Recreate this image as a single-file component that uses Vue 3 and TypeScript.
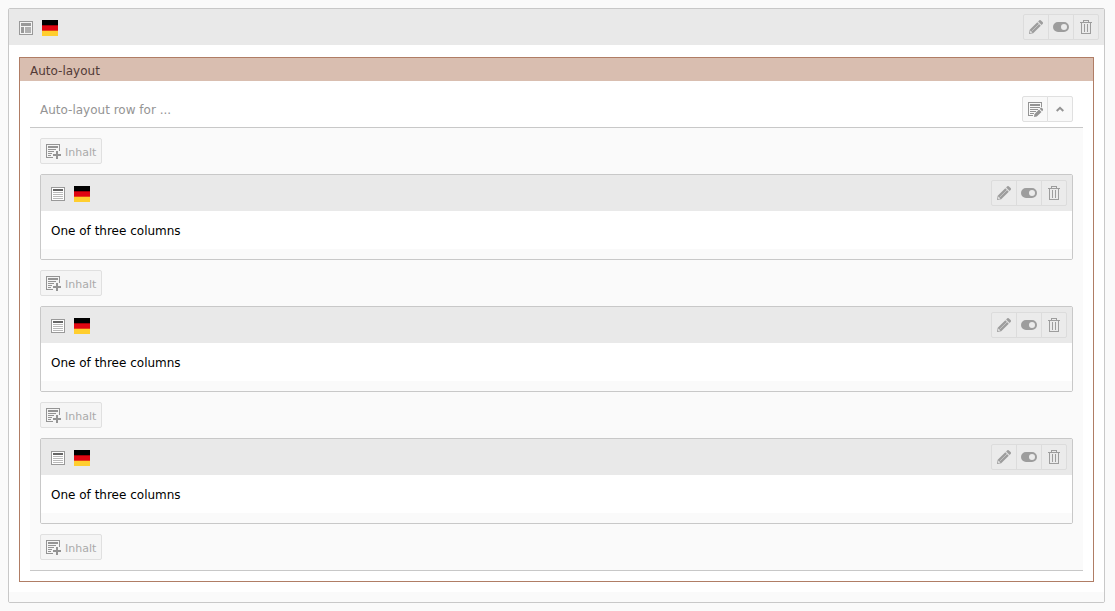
<script setup lang="ts">
interface ContentElement {
  id: number
  text: string
}

const elements: ContentElement[] = [
  { id: 1, text: 'One of three columns' },
  { id: 2, text: 'One of three columns' },
  { id: 3, text: 'One of three columns' },
]
</script>

<template>
  <svg class="sprite" aria-hidden="true">
    <symbol id="icon-container" viewBox="0 0 16 16">
      <path fill="#999" d="M1 1h14v14H1z" />
      <path fill="#f4f4f4" d="M2 2h12v12H2z" />
      <path fill="#999" d="M3 3h10v3H3zM3 7h3v6H3z" />
      <path fill="#b0b0b0" d="M7 7h6v6H7z" />
    </symbol>
    <symbol id="icon-text" viewBox="0 0 16 16">
      <path fill="#999" d="M1 1h14v14H1z" />
      <path fill="#fff" d="M2 2h12v12H2z" />
      <path fill="#666" d="M3 3h10v2H3z" />
      <path fill="#b9b9b9" d="M3 6h10v1H3zM3 8h10v1H3zM3 10h10v1H3zM3 12h10v1H3z" />
    </symbol>
    <symbol id="icon-flag" viewBox="0 0 16 16">
      <path d="M0 0h16v5H0z" />
      <path fill="#a30008" d="M0 5h16v1H0z" />
      <path fill="#e00712" d="M0 6h16v4H0z" />
      <path fill="#e8401a" d="M0 10h16v1H0z" />
      <path fill="#ffce2e" d="M0 11h16v5H0z" />
    </symbol>
    <symbol id="icon-pencil" viewBox="0 0 16 16">
      <path fill="#9d9d9d" fill-rule="evenodd" d="M9.3 3.2l3.5 3.5-7.6 7.6L1 15l.7-4.2zM2.400 11.600L2 14l2.400-.4z" />
      <path fill="#9d9d9d" d="M10.1 2.4l1.200-1.200q.7-.5 1.400 0l2.100 2.100q.5.7 0 1.400l-1.200 1.200z" />
      <path stroke="#d5d5d5" stroke-width=".7" d="M4 11.900L11 5M9.600 2.800l3.600 3.600" />
    </symbol>
    <symbol id="icon-toggle" viewBox="0 0 16 16">
      <path fill="#9d9d9d" fill-rule="evenodd" d="M5 3h6a5 5 0 0 1 0 10H5A5 5 0 0 1 5 3zm6 2a3 3 0 1 0 0 6 3 3 0 0 0 0-6z" />
    </symbol>
    <symbol id="icon-trash" viewBox="0 0 16 16">
      <path fill="#9d9d9d" fill-rule="evenodd" d="M5 1h6v2h3v1h-1v11H3V4H2V3h3zM6 2v1h4V2zM4 4v10h8V4z" />
      <path fill="#9d9d9d" d="M6 5h1v8H6zM9 5h1v8H9z" />
    </symbol>
    <symbol id="icon-new" viewBox="0 0 16 16">
      <path fill="#949494" d="M1 1h14v7h-1V2H2v12h6v1H1z" />
      <path fill="#949494" d="M3 3h10v2H3zM3 6h8v1H3zM3 8h6v1H3zM3 10h4v1H3zM3 12h3v1H3z" />
      <path fill="#949494" d="M11 8h2v3h3v2h-3v3h-2v-3H8v-2h3z" />
    </symbol>
    <symbol id="icon-edit-doc" viewBox="0 0 16 16">
      <path fill="#949494" d="M1 1h14v5h-1V2H2v12h4v1H1z" />
      <path fill="#949494" d="M3 3h10v2H3zM3 6h10v1H3zM3 8h8v1H3zM3 10h6v1H3zM3 12h4v1H3z" />
      <path fill="#949494" d="M12 8.500l2.500 2.500L9.800 15.600 7 16l.4-2.800zM12.700 7.800l1-1q.5-.4 1 0l1.400 1.400q.4.500 0 1l-1 1z" />
    </symbol>
    <symbol id="icon-up" viewBox="0 0 16 16">
      <path fill="none" stroke="#949494" stroke-width="2" d="M4.700 10L8 6.800 11.300 10" />
    </symbol>
  </svg>

  <main class="card">
    <header class="card-header">
      <div class="icons">
        <svg class="icon"><use href="#icon-container" /></svg>
        <svg class="icon"><use href="#icon-flag" /></svg>
      </div>
      <div class="btn-group">
        <button type="button" class="btn" aria-label="Bearbeiten"><svg class="icon"><use href="#icon-pencil" /></svg></button>
        <button type="button" class="btn" aria-label="Verbergen"><svg class="icon"><use href="#icon-toggle" /></svg></button>
        <button type="button" class="btn" aria-label="Löschen"><svg class="icon"><use href="#icon-trash" /></svg></button>
      </div>
    </header>

    <div class="card-body">
      <section class="container">
        <h1 class="container-title">Auto-layout</h1>
        <div class="row">
          <div class="row-header">
            <h2 class="row-title">Auto-layout row for ...</h2>
            <div class="btn-group">
              <button type="button" class="btn light" aria-label="Spalte bearbeiten"><svg class="icon"><use href="#icon-edit-doc" /></svg></button>
              <button type="button" class="btn light" aria-label="Einklappen"><svg class="icon"><use href="#icon-up" /></svg></button>
            </div>
          </div>
          <div class="row-body">
            <button type="button" class="btn add"><svg class="icon"><use href="#icon-new" /></svg><span class="label">Inhalt</span></button>
            <template v-for="element in elements" :key="element.id">
              <article class="card">
                <header class="card-header">
                  <div class="icons">
                    <svg class="icon"><use href="#icon-text" /></svg>
                    <svg class="icon"><use href="#icon-flag" /></svg>
                  </div>
                  <div class="btn-group">
                    <button type="button" class="btn" aria-label="Bearbeiten"><svg class="icon"><use href="#icon-pencil" /></svg></button>
                    <button type="button" class="btn" aria-label="Verbergen"><svg class="icon"><use href="#icon-toggle" /></svg></button>
                    <button type="button" class="btn" aria-label="Löschen"><svg class="icon"><use href="#icon-trash" /></svg></button>
                  </div>
                </header>
                <p class="text">{{ element.text }}</p>
                <div class="card-footer"></div>
              </article>
              <button type="button" class="btn add"><svg class="icon"><use href="#icon-new" /></svg><span class="label">Inhalt</span></button>
            </template>
          </div>
        </div>
      </section>
    </div>
    <div class="card-footer"></div>
  </main>
</template>

<style>
body {
  background: #fafafa;
}

#app {
  padding: 8px 10px 8px 8px;
  font-family: Verdana, "DejaVu Sans", sans-serif;
  font-size: 12px;
  line-height: 18px;
}
</style>

<style scoped>
.sprite {
  position: absolute;
  width: 0;
  height: 0;
}

.icon {
  display: block;
  flex: none;
  width: 16px;
  height: 16px;
}

.card {
  overflow: hidden;
  border: 1px solid #c8c8c8;
  border-radius: 2px;
  background: #fff;
}

.card-header {
  display: flex;
  align-items: center;
  justify-content: space-between;
  padding: 5px 5px 5px 9px;
  background: #e9e9e9;
}

.card-footer {
  height: 10px;
  background: #fafafa;
}

.card-body {
  padding: 12px 10px 10px;
}

.icons {
  display: flex;
  gap: 8px;
  padding-top: 2px;
}

.btn-group {
  display: flex;
}

.btn {
  display: flex;
  align-items: center;
  justify-content: center;
  width: 26px;
  height: 26px;
  margin: 0;
  padding: 0;
  border: 1px solid #dcdcdc;
  background: #ebebeb;
  font: inherit;
}

.btn + .btn {
  margin-left: -1px;
}

.btn:first-child {
  border-radius: 2px 0 0 2px;
}

.btn:last-child {
  border-radius: 0 2px 2px 0;
}

.btn.light {
  border-color: #e0e0e0;
  background: #f9f9f9;
}

.btn.add {
  gap: 4px;
  width: auto;
  padding: 0 5px 0 4px;
  border-color: #e0e0e0;
  border-radius: 2px;
  background: #f5f5f5;
  color: #aaa;
  font-size: 11px;
}

.label {
  padding-top: 3px;
}

.container {
  border: 1px solid #b07d65;
}

.container-title {
  margin: 0;
  padding: 4px 10px 1px;
  background: #d9beb0;
  color: #523a36;
  font-size: 12px;
  font-weight: 400;
}

.row {
  padding: 0 10px 10px;
}

.row-header {
  display: flex;
  align-items: center;
  justify-content: space-between;
  padding: 15px 10px 5px;
  border-bottom: 1px solid #c8c8c8;
}

.row-title {
  margin: 0;
  padding-top: 2px;
  color: #949494;
  font-size: 12px;
  font-weight: 400;
}

.row-body {
  display: flex;
  flex-direction: column;
  align-items: stretch;
  gap: 10px;
  padding: 10px;
  border-bottom: 1px solid #c8c8c8;
  background: #fafafa;
}

.row-body > .btn {
  align-self: flex-start;
}

.text {
  margin: 0;
  padding: 11px 10px 9px;
  color: #000;
}
</style>
